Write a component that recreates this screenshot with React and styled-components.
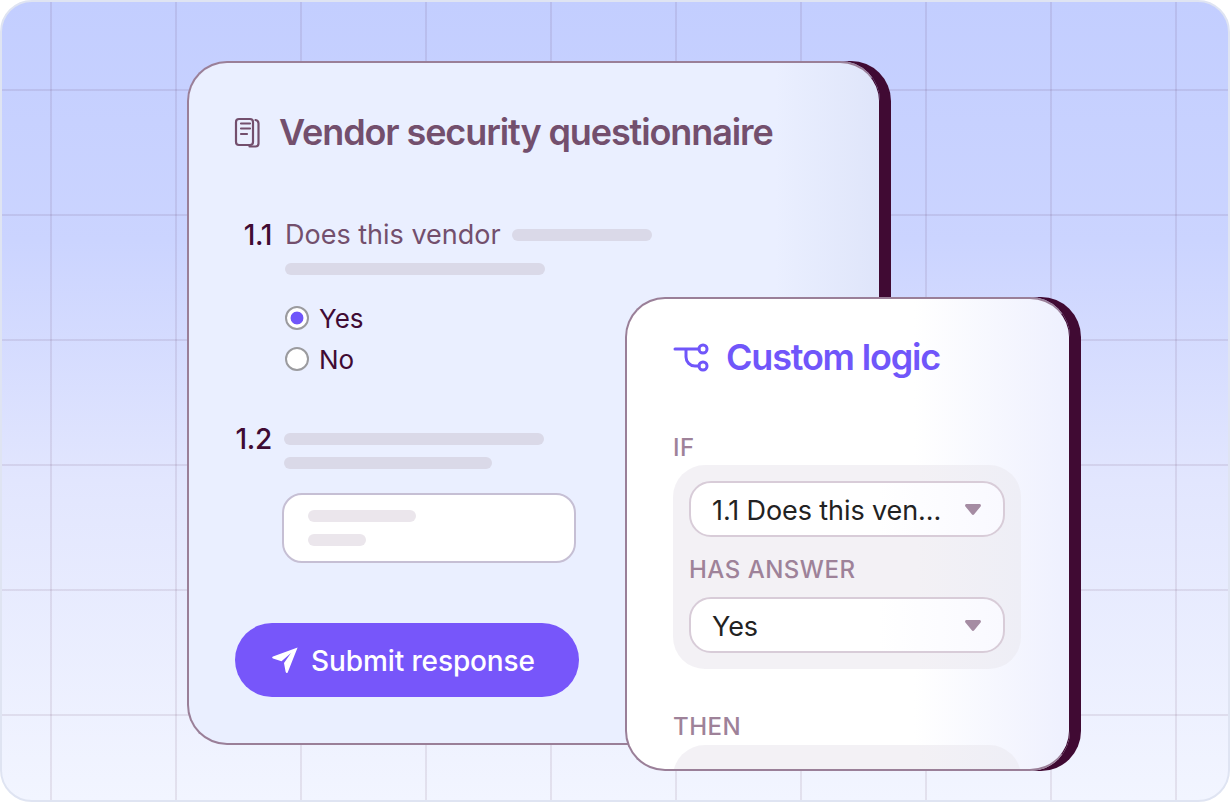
import React from "react";
import styled, { createGlobalStyle } from "styled-components";

const GlobalStyle = createGlobalStyle`
  html, body {
    margin: 0;
    padding: 0;
    background: #ffffff;
    font-family: Inter, "Noto Sans", sans-serif;
  }
`;

function DocIcon() {
  return (
    <svg width="26" height="31" viewBox="0 0 26 31" fill="none" stroke="#734f6d" strokeWidth="2.2" strokeLinecap="round">
      <rect x="2" y="2" width="17" height="26" rx="3" />
      <path d="M7 6.5h9M7 11.5h9M7 17h6" />
      <path d="M21.5 3c2 .4 3 1.4 3 3.5v20c0 2-1.2 3-3 3h-6" />
    </svg>
  );
}

function LogicIcon() {
  return (
    <svg width="36" height="30" viewBox="0 0 36 30" fill="none" stroke="#7056fa" strokeWidth="3" strokeLinecap="round">
      <path d="M2 7h24M13 7v8a9 9 0 0 0 9 9h4" />
      <circle cx="30" cy="7" r="4" />
      <circle cx="30" cy="24" r="4" />
    </svg>
  );
}

function SendIcon() {
  return (
    <svg width="28" height="28" viewBox="0 0 28 28" fill="#ffffff">
      <path d="M26.6 1.4 2 10.6c-1.2.8-1 1.6 0 1.9l8.5 2.7L20 7l-7 10 1.6 8.8c.5 1.6 1.6 1.7 2.2.4Z" />
    </svg>
  );
}

function Caret() {
  return (
    <svg width="16" height="11" viewBox="0 0 16 11" fill="#a58ca3">
      <path d="M1.6 0h12.8c1.3 0 2 1.4 1.2 2.4L9.2 10.3c-.6.8-1.8.8-2.4 0L.4 2.4C-.4 1.4.3 0 1.6 0Z" />
    </svg>
  );
}

function App() {
  return (
    <>
      <GlobalStyle />
      <Frame>
        <Questionnaire>
          <TitleRow>
            <DocIcon />
            <QuestionnaireTitle>Vendor security questionnaire</QuestionnaireTitle>
          </TitleRow>

          <QuestionRow>
            <Num>1.1</Num>
            <QuestionText>Does this vendor</QuestionText>
            <Bar $w={140} $ml={11} />
          </QuestionRow>
          <Bar $w={260} $ml={51} $mt={13} />

          <RadioList>
            <RadioRow>
              <Radio $on />
              <RadioLabel>Yes</RadioLabel>
            </RadioRow>
            <RadioRow>
              <Radio />
              <RadioLabel>No</RadioLabel>
            </RadioRow>
          </RadioList>

          <SecondQuestion>
            <Num>1.2</Num>
            <BarStack>
              <Bar $w={260} />
              <Bar $w={208} />
            </BarStack>
          </SecondQuestion>

          <AnswerBox>
            <Bar $w={108} $light />
            <Bar $w={58} $light />
          </AnswerBox>

          <SubmitButton>
            <SendIcon />
            Submit response
          </SubmitButton>
        </Questionnaire>

        <LogicCard>
          <LogicHeader>
            <LogicIcon />
            <LogicTitle>Custom logic</LogicTitle>
          </LogicHeader>

          <SectionLabel $mt={52}>IF</SectionLabel>
          <Group $mt={2}>
            <Select>
              <span>1.1 Does this ven...</span>
              <Caret />
            </Select>
            <InnerLabel>HAS ANSWER</InnerLabel>
            <Select>
              <span>Yes</span>
              <Caret />
            </Select>
          </Group>

          <SectionLabel $mt={43}>THEN</SectionLabel>
          <Group $mt={3} />
        </LogicCard>
      </Frame>
    </>
  );
}

const Frame = styled.div`
  position: relative;
  box-sizing: border-box;
  width: 1230px;
  height: 802px;
  padding: 59px 0 0 185px;
  border: 2px solid #dfe4f2;
  border-radius: 32px;
  overflow: hidden;
  background-color: #c4cfff;
  background-image:
    repeating-linear-gradient(90deg, transparent 0 48px, rgba(64, 10, 51, 0.085) 48px 50px, transparent 50px 125px),
    repeating-linear-gradient(180deg, transparent 0 87px, rgba(64, 10, 51, 0.085) 87px 89px, transparent 89px 125px),
    linear-gradient(180deg, #c3ceff 0%, #cbd4ff 30%, #e2e6fe 60%, #f2f5ff 100%);
  background-size: 1226px 798px;
`;

const Questionnaire = styled.section`
  box-sizing: border-box;
  width: 693px;
  height: 684px;
  padding: 45px 0 0 45px;
  border: 2px solid #9a7f98;
  border-right: 1px solid #400a33;
  border-radius: 40px;
  background: linear-gradient(90deg, #eaefff 0%, #eaefff 85%, #dfe5fa 100%);
  box-shadow: 11px 0 0 #400a33;
`;

const TitleRow = styled.div`
  display: flex;
  align-items: center;
  gap: 19px;
  height: 48px;
`;

const QuestionnaireTitle = styled.h1`
  margin: 0;
  font-size: 36px;
  font-weight: 600;
  letter-spacing: -1.1px;
  color: #734f6d;
`;

const QuestionRow = styled.div`
  display: flex;
  align-items: center;
  height: 30px;
  margin-top: 64px;
`;

const Num = styled.span`
  width: 38px;
  margin-right: 13px;
  text-align: right;
  font-size: 28px;
  line-height: 30px;
  font-weight: 500;
  letter-spacing: -0.3px;
  color: #400a33;
  flex: none;
`;

const QuestionText = styled.span`
  font-size: 27px;
  line-height: 30px;
  color: #734f6d;
`;

const Bar = styled.div`
  width: ${(p) => p.$w}px;
  height: 12px;
  margin-left: ${(p) => p.$ml || 0}px;
  margin-top: ${(p) => p.$mt || 0}px;
  border-radius: 6px;
  background: ${(p) => (p.$light ? "#ebe6ec" : "#dad9e8")};
  flex: none;
`;

const RadioList = styled.div`
  display: flex;
  flex-direction: column;
  gap: 11px;
  margin: 28px 0 0 51px;
`;

const RadioRow = styled.div`
  display: flex;
  align-items: center;
  gap: 10px;
  height: 30px;
`;

const Radio = styled.span`
  box-sizing: border-box;
  width: 24px;
  height: 24px;
  border: 2px solid #9b9b9f;
  border-radius: 50%;
  background: ${(p) =>
    p.$on ? "radial-gradient(circle, #7056fa 0 6px, #ffffff 6.8px)" : "#ffffff"};
`;

const RadioLabel = styled.span`
  font-size: 26px;
  color: #400a33;
`;

const SecondQuestion = styled.div`
  display: flex;
  align-items: flex-start;
  margin-top: 50px;
`;

const BarStack = styled.div`
  display: flex;
  flex-direction: column;
  gap: 12px;
  margin: 9px 0 0 -1px;
`;

const AnswerBox = styled.div`
  box-sizing: border-box;
  display: flex;
  flex-direction: column;
  gap: 12px;
  width: 294px;
  height: 70px;
  margin: 24px 0 0 48px;
  padding: 15px 0 0 24px;
  border: 2px solid #c6bfd4;
  border-radius: 20px;
  background: #ffffff;
`;

const SubmitButton = styled.button`
  display: flex;
  align-items: center;
  justify-content: center;
  gap: 12px;
  width: 344px;
  height: 74px;
  margin: 60px 0 0 1px;
  padding: 2px 8px 0 0;
  border: 0;
  border-radius: 37px;
  background: #7756fa;
  color: #ffffff;
  font-family: inherit;
  font-size: 28px;
  font-weight: 500;
  letter-spacing: -0.12px;

  svg {
    margin-top: -2px;
  }
`;

const LogicCard = styled.section`
  position: absolute;
  left: 623px;
  top: 295px;
  box-sizing: border-box;
  width: 445px;
  height: 474px;
  padding: 34px 0 0 46px;
  border: 2px solid #9a7f98;
  border-right: 1px solid #400a33;
  border-radius: 40px;
  overflow: hidden;
  background: linear-gradient(90deg, #ffffff 0%, #ffffff 65%, #eef0fe 100%);
  box-shadow: 11px 0 0 #400a33;
`;

const LogicHeader = styled.div`
  display: flex;
  align-items: center;
  gap: 17px;
  height: 48px;
`;

const LogicTitle = styled.h2`
  margin: 0;
  font-size: 36px;
  font-weight: 600;
  letter-spacing: -1.2px;
  color: #7056fa;
`;

const SectionLabel = styled.div`
  height: 30px;
  margin-top: ${(p) => p.$mt}px;
  font-size: 24px;
  line-height: 30px;
  font-weight: 500;
  letter-spacing: 0.5px;
  color: #9e8299;
`;

const InnerLabel = styled(SectionLabel)`
  margin: 18px 0 12px 0;
`;

const Group = styled.div`
  box-sizing: border-box;
  width: 348px;
  min-height: 204px;
  margin-top: ${(p) => p.$mt}px;
  padding: 16px;
  border-radius: 32px;
  background: linear-gradient(90deg, #f3f1f5 0%, #f3f1f5 70%, #eeeef6 100%);
`;

const Select = styled.div`
  box-sizing: border-box;
  display: flex;
  align-items: center;
  justify-content: space-between;
  height: 56px;
  padding: 0 22px 0 21px;
  border: 2px solid #d8ccd8;
  border-radius: 22px;
  background: linear-gradient(90deg, #ffffff 0%, #ffffff 60%, #f9f9ff 100%);
  font-size: 27px;
  letter-spacing: -0.1px;
  color: #222222;

  span {
    margin-top: 2px;
  }
`;

export default App;
